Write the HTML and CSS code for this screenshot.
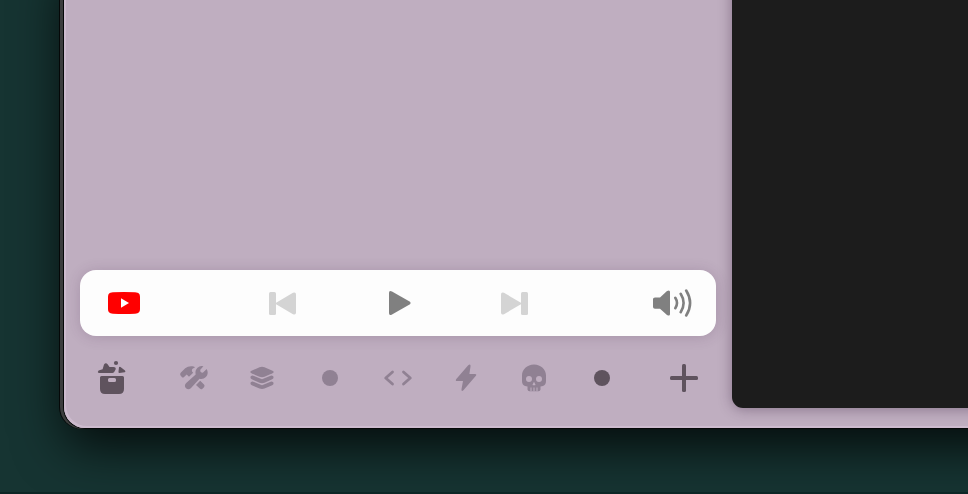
FILE: index.html
```html
<!DOCTYPE html>
<html lang="en">
<head>
<meta charset="utf-8">
<title>Browser sidebar</title>
<link rel="stylesheet" href="styles.css">
</head>
<body>
<main class="desktop">
  <div class="window">
    <aside class="sidebar">
      <section class="player">
        <svg class="icon" viewBox="-20 -20 40 40"><path fill="#f00" d="M-11-10.700Q0-11.300 11-10.700C15-10.400 16-9 16-5.500V5.500C16 9 15 10.400 11 10.700Q0 11.300-11 10.700C-15 10.400-16 9-16 5.500V-5.500C-16-9-15-10.400-11-10.700Z"/><path fill="#fff" d="M-3-4.700 5 0-3 4.700Z"/></svg>
        <div class="transport">
          <svg class="icon muted" viewBox="-20 -20 40 40"><rect x="-13" y="-11" width="7" height="23" rx="1.5"/><path d="M-5.500 1.500Q-7 .5-5.500-.5L11-10.200Q14-11.500 14-8.500V9.500Q14 12.500 11 11.200Z"/></svg>
          <svg class="icon solid" viewBox="-20 -20 40 40"><path d="M-9-10Q-9-13-6-11.500L12-1.200Q13.400 0 12 1.200L-6 11.500Q-9 13-9 10Z"/></svg>
          <svg class="icon muted" viewBox="-20 -20 40 40"><rect x="7" y="-11" width="7" height="23" rx="1.5"/><path d="M6.500 1.500Q8 .5 6.500-.5L-10-10.200Q-13-11.500-13-8.500V9.500Q-13 12.500-10 11.200Z"/></svg>
        </div>
        <svg class="icon solid" viewBox="-20 -20 40 40"><path d="M-19-4Q-19-5.500-17-5.500H-12L-5-12Q-2-13.500-2-11V11Q-2 13.500-5 12L-12 5.700H-17Q-19 5.700-19 4Z"/><path class="line" d="M3.300-5.200Q6.700 0 3.300 5.200M8.700-9.200Q14.500 0 8.700 9.200M14.200-12.500Q22 0 14.200 12.500"/></svg>
      </section>
      <nav class="spaces">
        <svg class="icon active" viewBox="-20 -20 40 40"><path fill-rule="evenodd" d="M-10.500-2H10.500Q12-2 12-.5V11Q12 16 7 16H-7Q-12 16-12 11V-.5Q-12-2-10.500-2ZM-2.500 0Q-4 0-4 1.500V2.500Q-4 4-2.500 4H2.500Q4 4 4 2.500V1.500Q4 0 2.500 0Z"/><path d="M-13.400-5Q-15-6-13.400-7.500L-9.400-8.700-8-13.500Q-6.200-16-4.400-13.700L-2.500-11 1.500-11Q4-11 3.700-8.700L2.200-6Q1.400-5 .3-5ZM7-10.700Q7.500-11.700 8.500-11L13-7.500Q14-6 12.700-5.700L7.300-5Q6.300-5 6.500-6.500Z"/><circle cx="4" cy="-15" r="2.100"/></svg>
        <svg class="icon" viewBox="-20 -20 40 40"><path d="M-13.300-5.200-8.800-9.800Q-5.800-12.200-1.500-11.700 1-11.400.8-10.200-2.800-9.500-2-6.500L-.8-5.200-5-1.200-7.300-3.600-10.200-.8Q-11.100 0-12-.8L-13.600-2.700Q-14.300-4-13.300-5.200ZM6.200 2.800 10 6.500Q11.200 7.900 10 9.200L8.200 11Q7 11.900 5.800 10.600L2 6.900Z"/><path d="M-7.800 4.900 1.700-3.500Q.7-7.600 3.500-10.300 6-12.600 9.400-11.700L6.300-8.300Q5.800-5.300 8.800-5.200L12.700-8.900Q15.200-4.200 11.900-1 9.300 1.500 5.500.7L-3.200 10.200Q-5.700 12.500-8 10.200-10.300 7.600-7.800 4.900Z"/></svg>
        <svg class="icon" viewBox="-20 -20 40 40"><path d="M-2.500-10.800Q0-11.800 2.500-10.800L10.500-7.200Q12.800-6 10.500-4.700L2.500-1.200Q0-.3-2.500-1.200L-10.500-4.700Q-12.800-6-10.500-7.200Z"/><path d="M-11.200-1.700Q-9.800-3-8-2L0 1.300 8-2Q9.800-3 11.200-1.700 12.200.2 10.200 1.300L2.500 4.800Q0 5.700-2.500 4.800L-10.200 1.300Q-12.200.2-11.200-1.700Z"/><path d="M-11.200 4.200Q-9.800 2.900-8 3.900L0 7.200 8 3.900Q9.800 2.900 11.200 4.200 12.200 6.100 10.200 7.200L2.500 10.600Q0 11.500-2.500 10.600L-10.200 7.200Q-12.200 6.100-11.200 4.200Z"/></svg>
        <svg class="icon" viewBox="-20 -20 40 40"><circle r="8"/></svg>
        <svg class="icon" viewBox="-20 -20 40 40"><path class="line code" d="M-5.500-6-12.300 0-5.500 6M5.500-6 12.300 0 5.500 6"/></svg>
        <svg class="icon" viewBox="-20 -20 40 40"><path d="M2-12.600Q4.900-14.600 4.500-11.500L3.400-4H9Q11.200-4 9.700-2L-2.600 12.200Q-4.800 14-4.500 11.200L-3 3H-9Q-11 3-9.700 1Z"/></svg>
        <svg class="icon" viewBox="-20 -20 40 40"><path fill-rule="evenodd" d="M0-13.500C7-13.500 12-8.500 12-2.500V3Q12 7 9 8L6.500 8.500V11.500Q6.300 13.300 4.500 13.300H-4.500Q-6.300 13.300-6.500 11.500V8.500L-9 8Q-12 7-12 3V-2.500C-12-8.500-7-13.500 0-13.500ZM-8 1A3 3 0 1 0-2 1A3 3 0 1 0-8 1ZM2 1A3 3 0 1 0 8 1A3 3 0 1 0 2 1ZM0 3.700-1.500 6.800Q-1 7.600 0 7.200 1 7.600 1.500 6.800ZM-3.500 9.500H-2.500V13.400H-3.500ZM-.5 9.500H.5V13.400H-.5ZM2.500 9.500H3.500V13.400H2.500Z"/></svg>
        <svg class="icon active" viewBox="-20 -20 40 40"><circle r="8"/></svg>
        <svg class="icon active" viewBox="-20 -20 40 40"><rect x="-14" y="-2" width="28" height="4" rx="1.500"/><rect x="-2" y="-14" width="4" height="28" rx="1.500"/></svg>
      </nav>
    </aside>
    <section class="page"></section>
  </div>
</main>
</body>
</html>
```
FILE: styles.css
```css
* {
  box-sizing: border-box;
}

body {
  margin: 0;
}

.desktop {
  height: 494px;
  padding-left: 64px;
  overflow: hidden;
  background: #163432;
  border-bottom: 2px solid #0d2726;
}

.window {
  display: flex;
  width: 1100px;
  height: 468px;
  margin-top: -40px;
  padding-top: 40px;
  border-radius: 0 0 0 21px;
  background: #bfaec0;
  box-shadow:
    inset 2px -2px 0 #cdbbce,
    0 0 0 1px #050808,
    -3px 0 0 1px #3b3d3d,
    -4px 0 0 1px #050808,
    0 18px 50px rgba(0, 0, 0, .78);
}

.sidebar {
  display: flex;
  flex: 0 0 668px;
  flex-direction: column;
  justify-content: flex-end;
  padding: 0 16px 30px;
}

.player {
  display: flex;
  align-items: center;
  justify-content: space-between;
  height: 66px;
  padding: 0 24px;
  border-radius: 16px;
  background: #fdfdfd;
  box-shadow: 0 1px 14px rgba(70, 40, 75, .2);
}

.transport {
  display: flex;
  gap: 76px;
}

.spaces {
  display: grid;
  grid-template-columns: 82px repeat(6, 68px) 82px 40px;
  align-items: center;
  height: 40px;
  margin-top: 22px;
  padding-left: 12px;
}

.icon {
  display: block;
  width: 40px;
  height: 40px;
  fill: #908193;
  stroke: none;
}

.icon.active {
  fill: #5f535e;
}

.icon.muted {
  fill: #d4d4d4;
}

.icon.solid {
  fill: #808080;
}

.line {
  fill: none;
  stroke: #808080;
  stroke-width: 2.6;
  stroke-linecap: round;
  stroke-linejoin: round;
}

.line.code {
  stroke: #908193;
  stroke-width: 2.8;
}

.page {
  flex: 1;
  height: 448px;
  margin-top: -40px;
  border-radius: 0 0 0 11px;
  background: #1c1c1c;
  box-shadow: 0 1px 14px rgba(50, 25, 55, .4);
}
```
